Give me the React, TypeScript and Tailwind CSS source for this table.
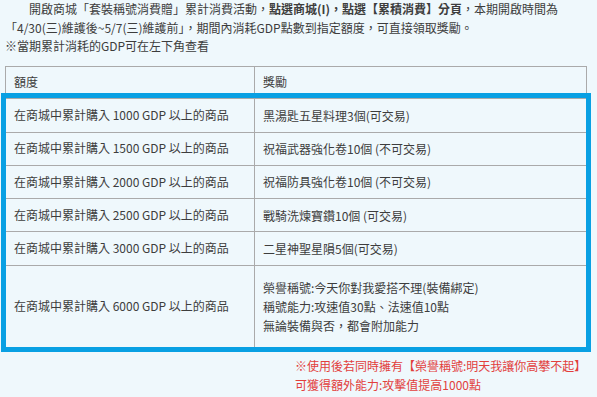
import React from "react";

const rows: { amount: string; reward: string[] }[] = [
  { amount: "1000", reward: ["黑湯匙五星料理3個(可交易)"] },
  { amount: "1500", reward: ["祝福武器強化卷10個 (不可交易)"] },
  { amount: "2000", reward: ["祝福防具強化卷10個 (不可交易)"] },
  { amount: "2500", reward: ["戰騎洗煉寶鑽10個 (可交易)"] },
  { amount: "3000", reward: ["二星神聖星隕5個(可交易)"] },
  {
    amount: "6000",
    reward: [
      "榮譽稱號:今天你對我愛搭不理(裝備綁定)",
      "稱號能力:攻速值30點、法速值10點",
      "無論裝備與否，都會附加能力",
    ],
  },
];

export default function App() {
  return (
    <div
      className="w-[597px] h-[397px] overflow-hidden bg-[#eff8fc] text-[12px] leading-[18.5px] text-[#3d3d3d]"
      style={{ fontFamily: '"Noto Sans CJK TC", sans-serif' }}
    >
      <div className="pl-[5px] pr-[5px]">
        <div className="flex whitespace-nowrap pl-[24px]">
          <span>開啟商城「套裝稱號消費贈」累計消費活動，</span>
          <span className="font-bold">點選商城(I)，點選【累積消費】分頁</span>
          <span>，本期開啟時間為</span>
        </div>
        <div className="whitespace-nowrap">
          「4/30(三)維護後~5/7(三)維護前」，期間內消耗GDP點數到指定額度，可直接領取獎勵。
        </div>
        <div>※當期累計消耗的GDP可在左下角查看</div>
      </div>

      <div className="ml-[5px] mt-[10px] w-[582px] border border-[#aaaaaa]">
        <div className="flex h-[32px] border-b border-[#aaaaaa]">
          <div className="flex w-[249px] items-center border-r border-[#aaaaaa] px-2">額度</div>
          <div className="flex flex-1 items-center px-2">獎勵</div>
        </div>

        <div className="relative">
          {rows.map((row, i) => {
            const last = i === rows.length - 1;
            return (
              <div
                key={row.amount}
                className={
                  last
                    ? "flex h-[81px]"
                    : i === 0
                    ? "flex h-[34px] border-b border-[#aaaaaa]"
                    : "flex h-[33.3px] border-b border-[#aaaaaa]"
                }
              >
                <div className="flex w-[249px] items-center border-r border-[#aaaaaa] px-2">
                  在商城中累計購入 {row.amount} GDP 以上的商品
                </div>
                <div className="flex flex-1 flex-col justify-center px-2 leading-[19px]">
                  {row.reward.map((line) => (
                    <div key={line}>{line}</div>
                  ))}
                </div>
              </div>
            );
          })}
          <div className="pointer-events-none absolute -left-[5px] -top-[6px] h-[259px] w-[590px] border-[5px] border-[#09a0e3]" />
        </div>
      </div>

      <div className="mt-[8px] pl-[295px] leading-[19px] text-[#e2403c]">
        <div>※使用後若同時擁有【榮譽稱號:明天我讓你高攀不起】</div>
        <div>可獲得額外能力:攻擊值提高1000點</div>
      </div>
    </div>
  );
}
